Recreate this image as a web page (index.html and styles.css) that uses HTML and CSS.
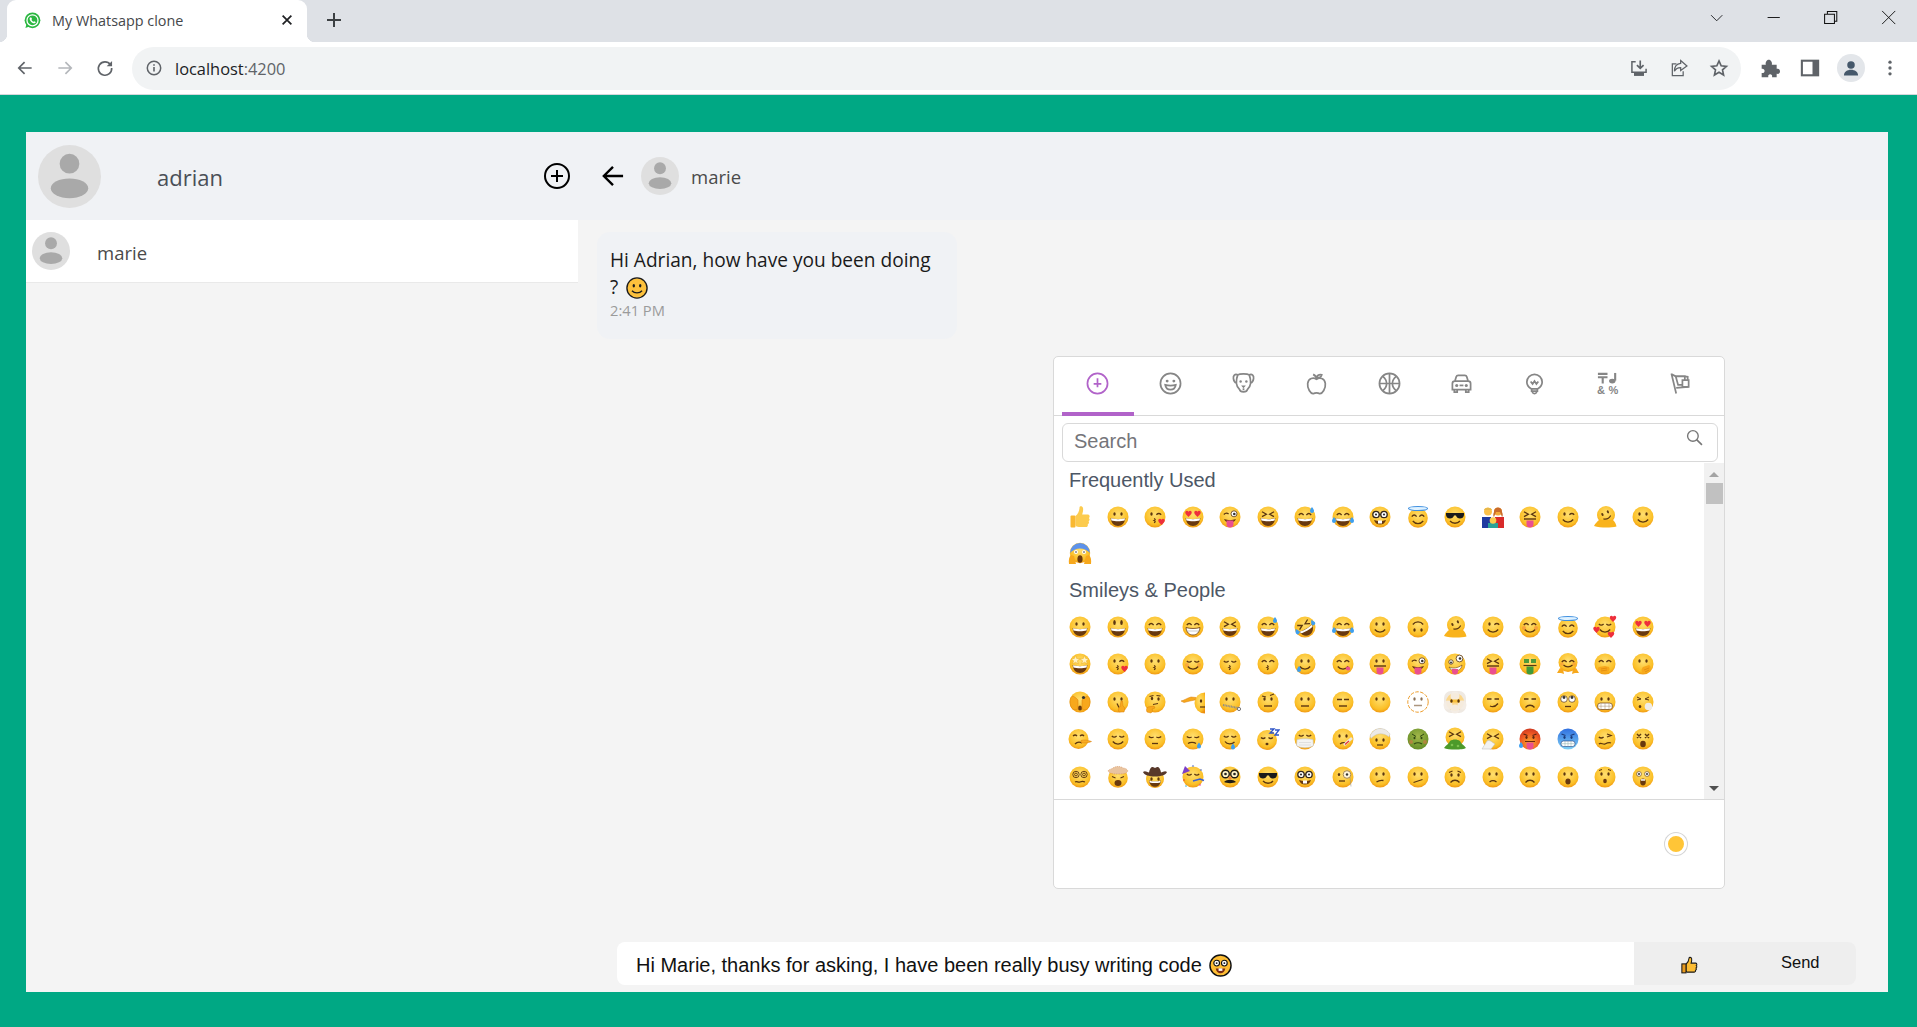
FILE: index.html
```html
<!DOCTYPE html>
<html lang="en">
<head>
    <title>My Whatsapp clone</title>
    <meta charset="utf-8" />
    <link rel="stylesheet" href="styles.css">
</head>
<body>
    <!-- shared emoji parts, every symbol is built from these -->
    <svg class="sprite" xmlns="http://www.w3.org/2000/svg">
        <defs>
            <radialGradient id="fg" cx=".5" cy=".38" r=".68">
                <stop offset="0" stop-color="#ffdf70"/><stop offset=".7" stop-color="#fbbf26"/><stop offset="1" stop-color="#ec8a0c"/>
            </radialGradient>
            <radialGradient id="gg" cx=".5" cy=".38" r=".68"><stop offset="0" stop-color="#a3b84a"/><stop offset="1" stop-color="#5f8a24"/></radialGradient>
            <radialGradient id="rg" cx=".5" cy=".7" r=".75"><stop offset="0" stop-color="#f8b02a"/><stop offset=".6" stop-color="#ef5a25"/><stop offset="1" stop-color="#c9321e"/></radialGradient>
            <linearGradient id="bg" x1="0" y1="0" x2="0" y2="1"><stop offset="0" stop-color="#2f6fe0"/><stop offset="1" stop-color="#7fd0f5"/></linearGradient>
            <circle id="f" cx="12" cy="12" r="10.5" fill="url(#fg)"/>
            <g id="eyes" fill="#5b3610"><ellipse cx="8.5" cy="9" rx="1.2" ry="1.8"/><ellipse cx="15.5" cy="9" rx="1.2" ry="1.8"/></g>
            <path id="arcs" d="M5.8 10.2q2.4-3.4 4.8 0M13.4 10.2q2.4-3.4 4.8 0" fill="none" stroke="#5b3610" stroke-width="1.4"/>
            <path id="shut" d="M5.8 9q2.4 2.2 4.8 0M13.4 9q2.4 2.2 4.8 0" fill="none" stroke="#5b3610" stroke-width="1.3"/>
            <path id="sq" d="M6 6.8l4.4 2.4L6 11.6M18 6.8l-4.4 2.4 4.4 2.4" fill="none" stroke="#5b3610" stroke-width="1.3"/>
            <g id="grin"><path d="M4.6 13c3.4 1.3 11.4 1.3 14.8 0-.4 5-3.6 8-7.4 8s-7-3-7.4-8z" fill="#69390f"/><path d="M5 13.3c3.4 1.1 10.6 1.1 14 0l-.4 2.2c-3.4.9-9.8.9-13.2 0z" fill="#fff"/></g>
            <path id="sm" d="M6.8 14.5c2.600 3.4 7.8 3.4 10.4 0" fill="none" stroke="#5b3610" stroke-width="1.3"/>
            <path id="fl" d="M8 16h8" stroke="#5b3610" stroke-width="1.4"/>
            <path id="fr" d="M7.5 17.5c2.5-3 6.5-3 9 0" fill="none" stroke="#5b3610" stroke-width="1.3"/>
            <path id="tg" d="M8.5 15.5h7V19a3.5 3.5 0 0 1-7 0z" fill="#ea4f90"/>
            <path id="kiss" d="M11 13.5q2.5.8 0 2q2.5 1 0 2.2" fill="none" stroke="#5b3610" stroke-width="1.2"/>
            <path id="ht" d="M0-2.2c-1-1.700-3.5-.9-3.2 1C-3 .6-1 1.800 0 3c1-1.200 3-2.400 3.200-4.200.3-1.900-2.200-2.700-3.200-1z" fill="#ee2f3c"/>
            <path id="dr" d="M0-3c1 1.600 2 2.700 2 3.900a2 2 0 0 1-4 0C-2-.3-1-1.400 0-3z" fill="#3d9ff0"/>
            <g id="wkeye"><circle cx="16" cy="8.800" r="3" fill="#fff" stroke="#5b3610" stroke-width=".8"/><circle cx="16.300" cy="9" r="1.300" fill="#333"/><path d="M5.800 9.500q2.400-2.500 4.800-.5" fill="none" stroke="#5b3610" stroke-width="1.300"/></g>
            <g id="wk"><ellipse cx="8.500" cy="9" rx="1.200" ry="1.800" fill="#5b3610"/><path d="M13.400 9.800q2.400-2.400 4.800 0" fill="none" stroke="#5b3610" stroke-width="1.400"/></g>
            <g id="specs" fill="#fff" stroke="#33261a" stroke-width="1.300"><circle cx="8" cy="9.500" r="3.200"/><circle cx="16" cy="9.500" r="3.200"/><path d="M11.200 9.500h1.600"/></g>
            <g id="shade"><path d="M3 8h18v2c-.3 2.500-2 3.500-4 3.500s-3.500-1.200-4-3h-2c-.5 1.800-2 3-4 3s-3.700-1-4-3.500z" fill="#1b1b1b"/></g>
        </defs>

        <symbol id="thumb" viewBox="0 0 24 24"><path d="M7.500 11c2.500-2 4-5 4-8.500 0-1.500 3-1.800 3.500.5.500 2.500-.500 5-.800 6.500H20c2 .3 2 3 .800 3.500 1.200.8 1 2.800-.300 3.300.9 1 .500 2.700-.800 3.100.500 1.300-.300 2.600-1.700 2.600H11c-2 0-3.500-1-3.500-2z" fill="#fccb4e"/><rect x="2.500" y="10.500" width="5" height="12" rx="1" fill="#f9b831"/></symbol>
        <symbol id="grinning" viewBox="0 0 24 24"><use href="#f"/><use href="#eyes"/><use href="#grin"/></symbol>
        <symbol id="smiley" viewBox="0 0 24 24"><use href="#f"/><ellipse cx="8.500" cy="7.500" rx="1.300" ry="2.600" fill="#5b3610"/><ellipse cx="15.500" cy="7.500" rx="1.300" ry="2.600" fill="#5b3610"/><use href="#grin"/></symbol>
        <symbol id="smile" viewBox="0 0 24 24"><use href="#f"/><use href="#arcs"/><use href="#grin"/></symbol>
        <symbol id="beam" viewBox="0 0 24 24"><use href="#f"/><use href="#arcs"/><path d="M5 12.500c3.400 1.300 10.600 1.300 14 0-.4 5-3.400 7.500-7 7.500s-6.600-2.500-7-7.500z" fill="#fff" stroke="#69390f" stroke-width=".8"/><path d="M5.500 16h13" stroke="#aaa" stroke-width=".6"/></symbol>
        <symbol id="squint" viewBox="0 0 24 24"><use href="#f"/><use href="#sq"/><use href="#grin"/></symbol>
        <symbol id="sweat" viewBox="0 0 24 24"><use href="#f"/><use href="#arcs"/><use href="#grin"/><use href="#dr" x="19" y="5"/></symbol>
        <symbol id="rofl" viewBox="0 0 24 24"><use href="#f"/><g transform="rotate(-30 12 12)"><use href="#sq"/><use href="#grin"/><use href="#dr" x="3" y="12"/><use href="#dr" x="21" y="12"/></g></symbol>
        <symbol id="joy" viewBox="0 0 24 24"><use href="#f"/><use href="#arcs"/><use href="#grin"/><use href="#dr" x="3" y="15"/><use href="#dr" x="21" y="15"/></symbol>
        <symbol id="slight" viewBox="0 0 24 24"><use href="#f"/><use href="#eyes"/><use href="#sm"/></symbol>
        <symbol id="upside" viewBox="0 0 24 24"><use href="#f"/><g transform="rotate(180 12 12)"><use href="#eyes"/><use href="#sm"/></g></symbol>
        <symbol id="melt" viewBox="0 0 24 24"><circle cx="13" cy="10" r="9" fill="url(#fg)"/><path d="M1 21c1.500-3 3-4 5-6h14c2 2 3 4 3.500 6.500-6 1.500-16 1.500-22.500-.5z" fill="#f9b31c"/><g transform="rotate(-25 13 10)"><ellipse cx="10" cy="8" rx="1" ry="1.600" fill="#5b3610"/><ellipse cx="16" cy="8" rx="1" ry="1.600" fill="#5b3610"/><path d="M9 12.500q4 3 8 0" fill="none" stroke="#5b3610" stroke-width="1.200"/></g></symbol>
        <symbol id="wink" viewBox="0 0 24 24"><use href="#f"/><use href="#wk"/><use href="#sm"/></symbol>
        <symbol id="blush" viewBox="0 0 24 24"><use href="#f"/><use href="#arcs"/><use href="#sm"/><circle cx="6" cy="13" r="2" fill="#f47a3c" opacity=".5"/><circle cx="18" cy="13" r="2" fill="#f47a3c" opacity=".5"/></symbol>
        <symbol id="halo" viewBox="0 0 24 24"><circle cx="12" cy="13" r="9.800" fill="url(#fg)"/><ellipse cx="12" cy="3.500" rx="9.500" ry="2" fill="#dff2ff" stroke="#3f8fe0" stroke-width="1.100"/><g transform="translate(0 1.500)"><use href="#arcs"/><use href="#sm"/></g></symbol>
        <symbol id="hearts" viewBox="0 0 24 24"><use href="#f"/><use href="#shut"/><use href="#sm"/><use href="#ht" x="20" y="4"/><use href="#ht" x="3.500" y="15"/><use href="#ht" x="18" y="20"/></symbol>
        <symbol id="hearteyes" viewBox="0 0 24 24"><use href="#f"/><use href="#ht" x="7.500" y="9"/><use href="#ht" x="16.500" y="9"/><use href="#grin"/></symbol>
        <symbol id="star" viewBox="0 0 24 24"><use href="#f"/><path d="M7.500 3.500l1.200 3 3.300.3-2.600 2 .9 3.200-2.800-1.800L4.700 12l.9-3.200-2.600-2 3.300-.3zM16.500 3.500l1.200 3 3.300.3-2.600 2 .9 3.200-2.800-1.800-2.800 1.800.9-3.200-2.600-2 3.300-.3z" fill="#fff3c4" stroke="#e8a91c" stroke-width=".5"/><use href="#grin"/></symbol>
        <symbol id="kissheart" viewBox="0 0 24 24"><use href="#f"/><use href="#wk"/><use href="#kiss"/><use href="#ht" x="18.500" y="17"/></symbol>
        <symbol id="kissing" viewBox="0 0 24 24"><use href="#f"/><use href="#eyes"/><use href="#kiss"/></symbol>
        <symbol id="relaxed" viewBox="0 0 24 24"><use href="#f"/><use href="#shut"/><use href="#sm"/><circle cx="6" cy="13" r="2" fill="#f47a3c" opacity=".4"/><circle cx="18" cy="13" r="2" fill="#f47a3c" opacity=".4"/></symbol>
        <symbol id="kissclosed" viewBox="0 0 24 24"><use href="#f"/><use href="#shut"/><use href="#kiss"/></symbol>
        <symbol id="kisssmile" viewBox="0 0 24 24"><use href="#f"/><use href="#arcs"/><use href="#kiss"/></symbol>
        <symbol id="tear" viewBox="0 0 24 24"><use href="#f"/><use href="#eyes"/><use href="#sm"/><use href="#dr" x="6" y="17"/></symbol>
        <symbol id="yum" viewBox="0 0 24 24"><use href="#f"/><use href="#arcs"/><use href="#sm"/><ellipse cx="17" cy="16.500" rx="2.200" ry="2" fill="#ea4f90"/></symbol>
        <symbol id="tongue" viewBox="0 0 24 24"><use href="#f"/><use href="#eyes"/><path d="M6 14h12" stroke="#5b3610" stroke-width="1.400"/><use href="#tg"/></symbol>
        <symbol id="winktongue" viewBox="0 0 24 24"><use href="#f"/><use href="#wkeye"/><path d="M6 14c4 1.500 8 1.500 12 0-.8 2.500-3 3.500-6 3.500s-5.200-1-6-3.500z" fill="#69390f"/><use href="#tg"/></symbol>
        <symbol id="zany" viewBox="0 0 24 24"><use href="#f"/><circle cx="16.500" cy="6.500" r="3.400" fill="#fff" stroke="#5b3610" stroke-width=".8"/><circle cx="17" cy="6.500" r="1.300" fill="#333"/><circle cx="8" cy="10" r="2.200" fill="#fff" stroke="#5b3610" stroke-width=".8"/><circle cx="8" cy="10.500" r="1" fill="#333"/><path d="M6 15c4 2 9 1 13-2-.5 4-3.500 6-7 6-3 0-5-2-6-4z" fill="#fff" stroke="#69390f" stroke-width=".6"/><path d="M9 17h6v2.500a3 3 0 0 1-6 0z" fill="#ea4f90"/></symbol>
        <symbol id="sqtongue" viewBox="0 0 24 24"><use href="#f"/><use href="#sq"/><path d="M6 14h12" stroke="#5b3610" stroke-width="1.400"/><use href="#tg"/></symbol>
        <symbol id="money" viewBox="0 0 24 24"><use href="#f"/><path d="M6 7h5v4H6zM13 7h5v4h-5z" fill="#4f9a3a"/><path d="M5.500 13.500h13" stroke="#5b3610" stroke-width="1.200"/><path d="M8.500 14.500h7v5a3.500 3 0 0 1-7 0z" fill="#3f9a3a"/></symbol>
        <symbol id="hug" viewBox="0 0 24 24"><circle cx="12" cy="10.500" r="9.500" fill="url(#fg)"/><use href="#arcs"/><path d="M7.500 13c2.500 2.500 6.500 2.500 9 0" fill="none" stroke="#5b3610" stroke-width="1.200"/><circle cx="6" cy="12" r="1.800" fill="#f47a3c" opacity=".4"/><circle cx="18" cy="12" r="1.800" fill="#f47a3c" opacity=".4"/><path d="M1 21l3-5 3 1 1 5-3-1zM23 21l-3-5-3 1-1 5 3-1z" fill="#f7a81c"/></symbol>
        <symbol id="giggle" viewBox="0 0 24 24"><use href="#f"/><use href="#arcs"/><path d="M7 21c-2-2-3-5-1-6l6-1 4 1c1 2 .500 4-2 6z" fill="#f7a81c"/><path d="M8 17l6-1M8 19l6-1" stroke="#d97f0c" stroke-width=".6"/></symbol>
        <symbol id="hush" viewBox="0 0 24 24"><use href="#f"/><use href="#eyes"/><path d="M12 21c-2-1-2-4 0-6l6-2c2 1 2 4 1 6z" fill="#f7a81c"/><path d="M13 18l5-2M14 20l4-2" stroke="#d97f0c" stroke-width=".6"/></symbol>
        <symbol id="peek" viewBox="0 0 24 24"><use href="#f"/><ellipse cx="12" cy="18" rx="2" ry="2.500" fill="#69390f"/><path d="M2 11c0-3 2-5 3-5l3 2 2 2v9c-4 2-8 0-8-8zM22 11c0-3-2-5-3-5l-3 2-2 2v9c4 2 8 0 8-8z" fill="#f7a81c" stroke="#d97f0c" stroke-width=".5"/><circle cx="15.500" cy="7.500" r="1.600" fill="#333"/></symbol>
        <symbol id="shush" viewBox="0 0 24 24"><use href="#f"/><use href="#eyes"/><path d="M11 13.500l2 4" stroke="#5b3610" stroke-width="1.200"/><path d="M13 22c-1-2-1-4 1-5l1-6h1.500l.5 5c2 1 2 4 1 6z" fill="#f7a81c" stroke="#d97f0c" stroke-width=".5"/></symbol>
        <symbol id="think" viewBox="0 0 24 24"><use href="#f"/><ellipse cx="9" cy="8.500" rx="1.200" ry="1.800" fill="#5b3610"/><ellipse cx="15.500" cy="9" rx="1.200" ry="1.800" fill="#5b3610"/><path d="M13.500 5.500l4 .5M6.500 6.500l4-1M10 14.500l5-1" fill="none" stroke="#5b3610" stroke-width="1.100"/><path d="M4 22c-1-2-.5-4 1-5l6-1 1 2-3 1c1 2 0 3-1 4z" fill="#f7a81c" stroke="#d97f0c" stroke-width=".5"/></symbol>
        <symbol id="salute" viewBox="0 0 24 24"><path d="M24 2.500a10.500 10.500 0 0 0 0 21z" fill="url(#fg)"/><ellipse cx="20" cy="11" rx="1.200" ry="1.800" fill="#5b3610"/><path d="M19 17h5" stroke="#5b3610" stroke-width="1.200"/><path d="M0 11c3-.5 6-3 10-4l5 .5-1 2.500-5 1-6 1.500z" fill="#f7a81c" stroke="#d97f0c" stroke-width=".5"/></symbol>
        <symbol id="zipper" viewBox="0 0 24 24"><use href="#f"/><use href="#eyes"/><path d="M5 15l15 3" stroke="#8b8b8b" stroke-width="2" stroke-dasharray="1 .6"/><circle cx="21" cy="19" r="1.600" fill="none" stroke="#777"/></symbol>
        <symbol id="brow" viewBox="0 0 24 24"><use href="#f"/><use href="#eyes"/><path d="M6 6l4 1M14 5.500l4-1.500" stroke="#5b3610" stroke-width="1.100"/><use href="#fl"/></symbol>
        <symbol id="neutral" viewBox="0 0 24 24"><use href="#f"/><use href="#eyes"/><use href="#fl"/></symbol>
        <symbol id="expr" viewBox="0 0 24 24"><use href="#f"/><path d="M6 9.500h5M13 9.500h5" stroke="#5b3610" stroke-width="1.600"/><use href="#fl"/></symbol>
        <symbol id="nomouth" viewBox="0 0 24 24"><use href="#f"/><use href="#eyes"/></symbol>
        <symbol id="dotted" viewBox="0 0 24 24"><circle cx="12" cy="12" r="10.200" fill="#fff" stroke="#ed9c2a" stroke-width="1" stroke-dasharray="3.600 1.400"/><g opacity=".7"><use href="#eyes"/><path d="M8 15.500h8" stroke="#8a6b48" stroke-width="1.500"/></g></symbol>
        <symbol id="clouds" viewBox="0 0 24 24"><rect x="1" y="1" width="22" height="22" rx="7" fill="#efe9e2"/><circle cx="12" cy="12" r="9" fill="#fcd78a"/><circle cx="12" cy="6" r="4.500" fill="#f4ede6" opacity=".9"/><circle cx="5" cy="15" r="4.500" fill="#f4ede6" opacity=".9"/><circle cx="19" cy="15" r="4.500" fill="#f4ede6" opacity=".9"/><circle cx="12" cy="19" r="4.500" fill="#f4ede6" opacity=".9"/><rect x="7" y="9.500" width="10" height="3" fill="#f9c03a"/><use href="#eyes" y="2"/></symbol>
        <symbol id="smirk" viewBox="0 0 24 24"><use href="#f"/><path d="M6 9h4.500M13.500 9H18" stroke="#5b3610" stroke-width="1.600"/><path d="M9 16c3 1.300 6 0 8-2.500" fill="none" stroke="#5b3610" stroke-width="1.300"/></symbol>
        <symbol id="unamused" viewBox="0 0 24 24"><use href="#f"/><path d="M6 9h4.500M13.500 9H18" stroke="#5b3610" stroke-width="1.600"/><use href="#fr"/></symbol>
        <symbol id="roll" viewBox="0 0 24 24"><use href="#f"/><circle cx="8" cy="9" r="3.300" fill="#fff" stroke="#5b3610" stroke-width=".7"/><circle cx="16" cy="9" r="3.300" fill="#fff" stroke="#5b3610" stroke-width=".7"/><circle cx="8" cy="7.500" r="1.400" fill="#333"/><circle cx="16" cy="7.500" r="1.400" fill="#333"/><path d="M9 16.500h6" stroke="#5b3610" stroke-width="1.300"/></symbol>
        <symbol id="grimace" viewBox="0 0 24 24"><use href="#f"/><use href="#eyes"/><rect x="4.500" y="13" width="15" height="6.500" rx="3" fill="#fff" stroke="#69390f" stroke-width=".7"/><path d="M4.500 16.200h15M8 13v6.500M12 13v6.500M16 13v6.500" stroke="#a78a64" stroke-width=".5"/></symbol>
        <symbol id="exhale" viewBox="0 0 24 24"><use href="#f"/><path d="M6 7l4 2-4 1M18 7l-4 2 4 1" fill="none" stroke="#5b3610" stroke-width="1"/><ellipse cx="9" cy="16.500" rx="1.300" ry="1.500" fill="#5b3610"/><circle cx="17.500" cy="16.500" r="3.800" fill="#f0ede8"/></symbol>
        <symbol id="lying" viewBox="0 0 24 24"><circle cx="10.500" cy="12" r="10" fill="url(#fg)"/><path d="M5 9q2.200-2 4 0M12 9q2.200-2 4 0" fill="none" stroke="#5b3610" stroke-width="1.300"/><path d="M7 17c2-2 5-2 7-1" fill="none" stroke="#5b3610" stroke-width="1.300"/><path d="M13 13.500c3-1 7-.5 10.500 1-3 1.500-8 2-10.500 1z" fill="#f8ab22" stroke="#d97f0c" stroke-width=".5"/></symbol>
        <symbol id="relieved" viewBox="0 0 24 24"><use href="#f"/><use href="#shut"/><use href="#sm"/></symbol>
        <symbol id="pensive" viewBox="0 0 24 24"><use href="#f"/><path d="M5.800 9.500q2.400 2 4.800.5M13.400 10q2.400 1.500 4.800-.5" fill="none" stroke="#5b3610" stroke-width="1.300"/><path d="M9 16.500h6" stroke="#5b3610" stroke-width="1.300"/></symbol>
        <symbol id="sleepy" viewBox="0 0 24 24"><use href="#f"/><path d="M5.800 9.500q2.400 2 4.800.5M13.400 10q2.400 1.500 4.800-.5" fill="none" stroke="#5b3610" stroke-width="1.300"/><path d="M7 16.500c2-1.500 6-1.500 8 0" fill="none" stroke="#5b3610" stroke-width="1.300"/><use href="#dr" x="18" y="18.500"/></symbol>
        <symbol id="drool" viewBox="0 0 24 24"><use href="#f"/><use href="#shut"/><path d="M7 14.500c2 3 7 3 9.500.5" fill="none" stroke="#5b3610" stroke-width="1.300"/><use href="#dr" x="15" y="19.500"/></symbol>
        <symbol id="sleeping" viewBox="0 0 24 24"><circle cx="11" cy="13" r="10" fill="url(#fg)"/><path d="M5 10.500q2.200 2 4.400 0M12.500 10.500q2.200 2 4.400 0" fill="none" stroke="#5b3610" stroke-width="1.300"/><ellipse cx="11" cy="17" rx="1.500" ry="1.200" fill="#5b3610"/><path d="M14 2h4l-4 4h4M19 3h4l-4 5h4" fill="none" stroke="#2f55c8" stroke-width="1.300"/></symbol>
        <symbol id="mask" viewBox="0 0 24 24"><use href="#f"/><use href="#shut" y="-1"/><path d="M4 12.500c4-1 12-1 16 0l.5 6c-4 3-13 3-17 0z" fill="#f4f4f2" stroke="#bbb" stroke-width=".5"/><path d="M6 15.500h12M6 18h12" stroke="#ccc" stroke-width=".5"/></symbol>
        <symbol id="thermo" viewBox="0 0 24 24"><use href="#f"/><use href="#eyes"/><path d="M9 17c2-1.500 5-1.500 7-.5" fill="none" stroke="#5b3610" stroke-width="1.200"/><path d="M13 18L21 11" stroke="#e8e8e8" stroke-width="2.600"/><path d="M14 17.500l4-3.500" stroke="#e33" stroke-width="1.200"/></symbol>
        <symbol id="bandage" viewBox="0 0 24 24"><use href="#f"/><path d="M2 9c2-5 6-7.500 10-7.500S19 3 22 7l-1 3C15 5 8 6 3 11.500z" fill="#eceae6" stroke="#bbb" stroke-width=".4"/><use href="#eyes" y="4"/><path d="M9 18h6" stroke="#5b3610" stroke-width="1.200"/></symbol>
        <symbol id="nausea" viewBox="0 0 24 24"><circle cx="12" cy="12" r="10.500" fill="url(#gg)"/><path d="M6 7l4 2.500M18 7l-4 2.500" stroke="#2f4a12" stroke-width="1"/><ellipse cx="8.500" cy="11" rx="1" ry="1.300" fill="#2f4a12"/><ellipse cx="15.500" cy="11" rx="1" ry="1.300" fill="#2f4a12"/><path d="M8 17q4-2.500 8 0" fill="none" stroke="#2f4a12" stroke-width="1.200"/><circle cx="5" cy="15" r="2" fill="#e8704a" opacity=".5"/><circle cx="19" cy="15" r="2" fill="#e8704a" opacity=".5"/></symbol>
        <symbol id="vomit" viewBox="0 0 24 24"><circle cx="12" cy="10" r="9.500" fill="url(#fg)"/><use href="#sq" y="-2"/><path d="M7 14c3-2 7-2 10 0 1 3 4 4 6 7-3 2-18 2-22 0 2-3 5-4 6-7z" fill="#4c9a2a"/><circle cx="9" cy="18" r="1.300" fill="#7cc04f"/><circle cx="15" cy="19" r="1.300" fill="#7cc04f"/></symbol>
        <symbol id="sneeze" viewBox="0 0 24 24"><use href="#f"/><use href="#sq"/><path d="M1 22l5-8c2-1 4 0 5 1l3 2-4 5z" fill="#f2f2f2" stroke="#bbb" stroke-width=".5"/></symbol>
        <symbol id="hot" viewBox="0 0 24 24"><circle cx="12" cy="12" r="10.500" fill="url(#rg)"/><path d="M5.500 7l4 1.500M18.500 7l-4 1.500" stroke="#5b2510" stroke-width="1.100"/><ellipse cx="8.500" cy="10.500" rx="1.100" ry="1.400" fill="#5b2510"/><ellipse cx="15.500" cy="10.500" rx="1.100" ry="1.400" fill="#5b2510"/><path d="M7 14h10v1H7z" fill="#69290f"/><use href="#tg"/><use href="#dr" x="3" y="18"/></symbol>
        <symbol id="cold" viewBox="0 0 24 24"><circle cx="12" cy="12" r="10.500" fill="url(#bg)"/><path d="M5.500 7l4 1.500M18.500 7l-4 1.500" stroke="#1b3a7a" stroke-width="1.100"/><ellipse cx="8.500" cy="10.500" rx="1.100" ry="1.400" fill="#1b3a7a"/><ellipse cx="15.500" cy="10.500" rx="1.100" ry="1.400" fill="#1b3a7a"/><rect x="5" y="14" width="14" height="5.500" rx="2.500" fill="#fff" stroke="#1b3a7a" stroke-width=".6"/><path d="M5 16.700h14M9 14v5.500M12 14v5.500M15 14v5.500" stroke="#8aa" stroke-width=".5"/></symbol>
        <symbol id="woozy" viewBox="0 0 24 24"><use href="#f"/><path d="M5.800 10q2.400 2 4.800 0" fill="none" stroke="#5b3610" stroke-width="1.300"/><path d="M14 7l4 1.500-4 1.500" fill="none" stroke="#5b3610" stroke-width="1.300"/><path d="M6 17c2-2 4 1 6 0s4-2 6-1" fill="none" stroke="#5b3610" stroke-width="1.300"/></symbol>
        <symbol id="dizzy" viewBox="0 0 24 24"><use href="#f"/><path d="M6 7l4 4M10 7l-4 4M14 7l4 4M18 7l-4 4" stroke="#5b3610" stroke-width="1.400"/><ellipse cx="12" cy="17" rx="2.800" ry="3.200" fill="#69390f"/></symbol>
        <symbol id="spiral" viewBox="0 0 24 24"><use href="#f"/><g fill="none" stroke="#5b3610" stroke-width=".9"><circle cx="8" cy="9.500" r="3.200"/><circle cx="8" cy="9.500" r="1.400"/><circle cx="16" cy="9.500" r="3.200"/><circle cx="16" cy="9.500" r="1.400"/><path d="M7 17c2-1.500 3 1 5 0s3-1 5 0" stroke-width="1.200"/></g></symbol>
        <symbol id="explode" viewBox="0 0 24 24"><circle cx="12" cy="13" r="9.800" fill="url(#fg)"/><path d="M2 6c1-2 4-2 5-3 2-2 8-2 10 0 2 0 4 1 5 3-2 3-5 3-10 3S4 9 2 6z" fill="#e9c4a0" stroke="#cc7a3c" stroke-width=".5" stroke-dasharray="1 1"/><path d="M6 11.500l3.500 1.500M18 11.500L14.500 13" stroke="#5b3610" stroke-width="1.100"/><ellipse cx="12" cy="18" rx="3.500" ry="3" fill="#69390f"/></symbol>
        <symbol id="cowboy" viewBox="0 0 24 24"><circle cx="12" cy="14" r="9" fill="url(#fg)"/><path d="M0 7c2-2 4 0 6 .5C6.500 4 8 2 9.500 2c1 0 1.500 .8 2.500 .8S13.500 2 14.500 2C16 2 17.500 4 18 7.500c2-.5 4-2.500 6-.5-1 3-6 4.500-12 4.500S1 10 0 7z" fill="#57382a"/><use href="#eyes" y="5"/><use href="#grin" transform="translate(2.400 5) scale(.8)"/></symbol>
        <symbol id="party" viewBox="0 0 24 24"><use href="#f"/><use href="#shut"/><path d="M1 9l3-8 5 5z" fill="#7c3fc8"/><path d="M12 16l7-2 4 1.500" fill="none" stroke="#3a5fd0" stroke-width="1.500"/><circle cx="3" cy="15" r=".8" fill="#e33"/><circle cx="20" cy="5" r=".8" fill="#3a5fd0"/><circle cx="5" cy="21" r=".8" fill="#3ac"/><circle cx="19" cy="20" r=".8" fill="#e3a"/><circle cx="12" cy="1" r=".8" fill="#3a5fd0"/></symbol>
        <symbol id="disguise" viewBox="0 0 24 24"><use href="#f"/><g fill="#fff3c9" stroke="#1f1a14" stroke-width="1.400"><circle cx="7.500" cy="9" r="3.800"/><circle cx="16.500" cy="9" r="3.800"/></g><circle cx="7.500" cy="9" r="1.300" fill="#222"/><circle cx="16.500" cy="9" r="1.300" fill="#222"/><path d="M6 17c3-3 9-3 12 0-3 1.500-9 1.500-12 0z" fill="#1f1a14"/><circle cx="12" cy="13" r="1.800" fill="#f08a3a"/></symbol>
        <symbol id="shades" viewBox="0 0 24 24"><use href="#f"/><use href="#shade"/><path d="M7 16c2.600 3 7.400 3 10 0" fill="none" stroke="#5b3610" stroke-width="1.300"/></symbol>
        <symbol id="nerd" viewBox="0 0 24 24"><use href="#f"/><use href="#specs"/><circle cx="8" cy="9.500" r="1.100" fill="#333"/><circle cx="16" cy="9.500" r="1.100" fill="#333"/><path d="M6 15c3.500 1.500 8.500 1.500 12 0-1 3-3 4.500-6 4.500s-5-1.500-6-4.500z" fill="#69390f"/><rect x="10" y="15.500" width="4" height="3" fill="#fff"/></symbol>
        <symbol id="monocle" viewBox="0 0 24 24"><use href="#f"/><ellipse cx="8" cy="9.500" rx="1.200" ry="1.600" fill="#5b3610"/><circle cx="16" cy="9.500" r="3.800" fill="#fff6dc" stroke="#a88a5a" stroke-width="1"/><circle cx="16" cy="9.500" r="1.200" fill="#333"/><path d="M8 16h6" stroke="#5b3610" stroke-width="1.300"/><path d="M19 12.500l1 9" stroke="#888" stroke-width=".5"/></symbol>
        <symbol id="confused" viewBox="0 0 24 24"><use href="#f"/><use href="#eyes"/><path d="M8.500 17c2-1.500 4.500-2 7-1.500" fill="none" stroke="#5b3610" stroke-width="1.300"/></symbol>
        <symbol id="diag" viewBox="0 0 24 24"><use href="#f"/><use href="#eyes"/><path d="M7.500 17.500l9-3" stroke="#5b3610" stroke-width="1.300"/></symbol>
        <symbol id="worried" viewBox="0 0 24 24"><use href="#f"/><path d="M6 7.500l3.500-1.500M18 7.500L14.500 6" stroke="#5b3610" stroke-width="1.100"/><use href="#eyes" y="1"/><use href="#fr"/></symbol>
        <symbol id="sfrown" viewBox="0 0 24 24"><use href="#f"/><use href="#eyes"/><path d="M8.500 17c2-1.500 5-1.500 7 0" fill="none" stroke="#5b3610" stroke-width="1.300"/></symbol>
        <symbol id="frown" viewBox="0 0 24 24"><use href="#f"/><use href="#eyes"/><use href="#fr"/></symbol>
        <symbol id="openm" viewBox="0 0 24 24"><use href="#f"/><use href="#eyes"/><ellipse cx="12" cy="16.500" rx="2.600" ry="3" fill="#69390f"/></symbol>
        <symbol id="hushed" viewBox="0 0 24 24"><use href="#f"/><use href="#eyes"/><path d="M6 5.500l3-1M18 5.500l-3-1" stroke="#5b3610" stroke-width="1"/><ellipse cx="12" cy="16" rx="1.800" ry="2.200" fill="#69390f"/></symbol>
        <symbol id="astonished" viewBox="0 0 24 24"><use href="#f"/><circle cx="8" cy="9" r="2.400" fill="#fff" stroke="#5b3610" stroke-width=".6"/><circle cx="16" cy="9" r="2.400" fill="#fff" stroke="#5b3610" stroke-width=".6"/><circle cx="8" cy="9" r="1" fill="#333"/><circle cx="16" cy="9" r="1" fill="#333"/><ellipse cx="12" cy="17" rx="2.800" ry="3.400" fill="#69390f"/><rect x="10" y="14.200" width="4" height="1.500" fill="#fff"/></symbol>
        <symbol id="family" viewBox="0 0 24 24"><rect x="1" y="12" width="9" height="11" fill="#1f3aa0"/><rect x="14" y="12" width="9" height="11" fill="#d82a2a"/><circle cx="7" cy="6.500" r="4" fill="#fbc14a"/><circle cx="17" cy="6.500" r="4" fill="#f4a93a"/><path d="M13 7c0-6 8-6 8 0 1 2 1 4 0 5l-2-5-4 0-2 5c-1-1-1-3 0-5z" fill="#c96a2a"/><path d="M3 5c1-3 7-3 8 0H3z" fill="#e8b84a"/><rect x="7" y="18" width="10" height="5" fill="#2aa198"/><circle cx="12" cy="15.500" r="3.300" fill="#fcca4e"/></symbol>
        <symbol id="scream" viewBox="0 0 24 24"><circle cx="12" cy="11" r="10.200" fill="url(#fg)"/><path d="M2 11a10 10 0 0 1 20 0c-3-3-6-4.500-10-4.500S5 8 2 11z" fill="#5d92ea"/><circle cx="8" cy="10" r="2" fill="#fff"/><circle cx="16" cy="10" r="2" fill="#fff"/><circle cx="8" cy="10" r=".8" fill="#333"/><circle cx="16" cy="10" r=".8" fill="#333"/><ellipse cx="12" cy="17" rx="2.600" ry="3.800" fill="#69390f"/><path d="M1 22c-.5-4 0-7 2-9l3 1 2 8zM23 22c.5-4 0-7-2-9l-3 1-2 8z" fill="#f7a81c"/></symbol>
    </svg>

    <div class="tabstrip">
        <div class="tab">
            <svg class="favicon" viewBox="0 0 16 16"><circle cx="8" cy="7.800" r="7.400" fill="#2bb741"/><path d="M1.300 15l1.200-4.200 2.600 2.800z" fill="#2bb741"/><circle cx="8" cy="7.800" r="5.200" fill="none" stroke="#fff" stroke-width="1.200"/><path d="M5.800 5.200c-.8.800-.6 2 .3 3.200s2.300 2.200 3.400 2.200c.9 0 1.500-.5 1.500-1.200L9.700 8.600l-.7.600C8.200 8.800 7.400 8 7 7.200l.6-.7-.8-1.400z" fill="#fff"/></svg>
            <span class="tab-title">My Whatsapp clone</span>
            <svg class="tab-close" viewBox="0 0 16 16"><path d="M3 3l10 10M13 3L3 13" stroke="#202124" stroke-width="2"/></svg>
        </div>
        <svg class="new-tab" viewBox="0 0 16 16"><path d="M8 1v14M1 8h14" stroke="#3c4043" stroke-width="2"/></svg>
        <div class="win-controls">
            <svg viewBox="0 0 16 16"><path d="M2 5.500l6 6 6-6" fill="none" stroke="#202124"/></svg>
            <svg viewBox="0 0 16 16"><path d="M1.500 8h13" stroke="#111" stroke-width="1"/></svg>
            <svg viewBox="0 0 16 16"><path d="M1.500 4.500h10.500v10H1.500zM4.500 4.500V1.500h10v10.500h-2.500" fill="none" stroke="#111" stroke-width="1.100"/></svg>
            <svg viewBox="0 0 16 16"><path d="M1 1l14 14M15 1L1 15" stroke="#111" stroke-width="1"/></svg>
        </div>
    </div>

    <div class="toolbar">
        <svg class="tool first" viewBox="0 0 24 24"><path d="M20 12H5M11.500 5L4.500 12l7 7" fill="none" stroke="#5f6368" stroke-width="2"/></svg>
        <svg class="tool" viewBox="0 0 24 24"><path d="M4 12h15M12.500 5l7 7-7 7" fill="none" stroke="#b4b7bb" stroke-width="2"/></svg>
        <svg class="tool" viewBox="0 0 24 24"><path d="M18.500 8A8 8 0 1 0 20 12" fill="none" stroke="#5f6368" stroke-width="2"/><path d="M20.500 3.500v6.500H14z" fill="#5f6368"/></svg>
        <div class="omnibox">
            <svg class="info" viewBox="0 0 16 16"><circle cx="8" cy="8" r="6.700" fill="none" stroke="#5f6368" stroke-width="1.500"/><path d="M8 7v4.500M8 4.200v1.600" stroke="#5f6368" stroke-width="1.600"/></svg>
            <span class="url">localhost<span class="url-port">:4200</span></span>
            <div class="omni-actions">
                <svg viewBox="0 0 24 24"><path d="M8 4.500H3.500V17h17V13" fill="none" stroke="#5f6368" stroke-width="1.800"/><path d="M13.500 3v9M9.500 8.500l4 4 4-4" fill="none" stroke="#5f6368" stroke-width="2"/><rect x="6" y="18" width="12" height="3.500" fill="#5f6368"/></svg>
                <svg viewBox="0 0 24 24"><path d="M9 7H4v14h13v-5" fill="none" stroke="#5f6368" stroke-width="1.500"/><path d="M14 3l7.500 6.500L14 15v-3.500c-3.500 0-6 1.500-7.500 4.500 0-5 2.500-9 7.500-9.500z" fill="none" stroke="#5f6368" stroke-width="1.500"/></svg>
                <svg viewBox="0 0 24 24"><path d="M12 3.500l2.600 5.800 6.300.7-4.700 4.200 1.300 6.200-5.500-3.200-5.500 3.200 1.300-6.200L3.100 10l6.300-.7z" fill="none" stroke="#5f6368" stroke-width="2"/></svg>
            </div>
        </div>
        <div class="extras">
            <svg viewBox="0 0 24 24"><path d="M2 8h5c-.8-2.800.9-6 3.500-6S15 5.200 14.200 8H20v5c2.800-.8 4 1 4 3s-1.200 3.800-4 3v4h-5.500c.6-2.500-.8-3.500-2.300-3.500S9.400 20.500 10 23H2v-5c2.300.5 3.500-1 3.500-2.500S4.300 12.500 2 13z" fill="#5f6368"/></svg>
            <svg viewBox="0 0 24 24"><rect x="1" y="2" width="22" height="20" fill="#5f6368"/><rect x="3.500" y="4.500" width="11.500" height="15" fill="#fff"/></svg>
            <span class="profile"><svg viewBox="0 0 24 24"><circle cx="12" cy="8.500" r="4.500" fill="#45586b"/><path d="M3.500 21c0-4.500 4-7 8.500-7s8.500 2.500 8.500 7z" fill="#45586b"/></svg></span>
            <svg viewBox="0 0 24 24"><circle cx="12" cy="5" r="2" fill="#5f6368"/><circle cx="12" cy="12" r="2" fill="#5f6368"/><circle cx="12" cy="19" r="2" fill="#5f6368"/></svg>
        </div>
    </div>

    <main class="page">
        <div class="app">
            <section class="sidebar">
                <header class="side-head">
                    <svg class="avatar avatar-lg" viewBox="0 0 64 64"><circle cx="32" cy="32" r="32" fill="#dfdfdf"/><circle cx="32" cy="19" r="10" fill="#a9a9a9"/><ellipse cx="32" cy="44" rx="19" ry="10" fill="#a9a9a9"/></svg>
                    <span class="me-name">adrian</span>
                    <svg class="add-chat" viewBox="0 0 26 26"><circle cx="13" cy="13" r="12" fill="none" stroke="#000" stroke-width="2"/><path d="M13 7v12M7 13h12" stroke="#000" stroke-width="2"/></svg>
                </header>
                <div class="contact">
                    <svg class="avatar avatar-sm" viewBox="0 0 64 64"><circle cx="32" cy="32" r="32" fill="#dfdfdf"/><circle cx="32" cy="19" r="10" fill="#a9a9a9"/><ellipse cx="32" cy="44" rx="19" ry="10" fill="#a9a9a9"/></svg>
                    <span class="contact-name">marie</span>
                </div>
            </section>

            <section class="chat">
                <header class="chat-head">
                    <svg class="back" viewBox="0 0 24 24"><path d="M23 12H2M12 2L2 12l10 10" fill="none" stroke="#000" stroke-width="2.600"/></svg>
                    <svg class="avatar avatar-sm" viewBox="0 0 64 64"><circle cx="32" cy="32" r="32" fill="#dfdfdf"/><circle cx="32" cy="19" r="10" fill="#a9a9a9"/><ellipse cx="32" cy="44" rx="19" ry="10" fill="#a9a9a9"/></svg>
                    <span class="contact-name">marie</span>
                </header>

                <div class="bubble">
                    <p class="bubble-text">Hi Adrian, how have you been doing<br>? <svg class="msg-emoji" viewBox="0 0 24 24"><circle cx="12" cy="12" r="11" fill="#fdc13c" stroke="#1b1b1b" stroke-width="1.500"/><ellipse cx="8.500" cy="9.500" rx="1.300" ry="1.900" fill="#1b1b1b"/><ellipse cx="15.500" cy="9.500" rx="1.300" ry="1.900" fill="#1b1b1b"/><path d="M6.500 15c2.800 3 8.200 3 11 0" fill="none" stroke="#1b1b1b" stroke-width="1.500"/></svg></p>
                    <span class="bubble-time">2:41 PM</span>
                </div>

                <div class="composer">
                    <div class="composer-input">Hi Marie, thanks for asking, I have been really busy writing code <svg class="msg-emoji" viewBox="0 0 24 24"><circle cx="12" cy="12" r="11" fill="#fdbd34" stroke="#111" stroke-width="1.500"/><circle cx="8" cy="9.500" r="3" fill="#fff" stroke="#111" stroke-width="1.200"/><circle cx="16" cy="9.500" r="3" fill="#fff" stroke="#111" stroke-width="1.200"/><circle cx="8" cy="9.500" r="1" fill="#111"/><circle cx="16" cy="9.500" r="1" fill="#111"/><path d="M7 15h10c-.5 3-2.500 5-5 5s-4.500-2-5-5z" fill="#7a2a12"/><rect x="10" y="15" width="4" height="2.600" fill="#fff"/></svg></div>
                    <div class="composer-actions">
                        <svg class="like" viewBox="0 0 24 24"><path d="M8 11c2.500-2 3.800-4.800 4-8 .1-1.500 3-1.700 3.500.5.500 2.300-.3 4.500-.7 6H21c1.800.3 1.800 2.800.7 3.400 1 .8.900 2.700-.3 3.200.8 1 .5 2.600-.8 3 .4 1.200-.3 2.400-1.600 2.400H11c-1.800 0-3-1-3-2z" fill="#fdbd34" stroke="#1a1a1a" stroke-width="1.400"/><rect x="2.500" y="10.500" width="5.500" height="12" fill="#e89a1f" stroke="#1a1a1a" stroke-width="1.400"/></svg>
                        <span class="send">Send</span>
                    </div>
                </div>

                <div class="picker">
                    <nav class="picker-tabs">
                        <span class="ptab active"><svg viewBox="0 0 24 24"><circle cx="12" cy="12" r="10.500"/><path d="M12 6.500V16M8 12.500h8"/></svg></span>
                        <span class="ptab"><svg viewBox="0 0 24 24"><circle cx="12" cy="12" r="10.500"/><circle class="fill" cx="8.500" cy="9.500" r="1.500"/><circle class="fill" cx="15.500" cy="9.500" r="1.500"/><path d="M6.500 13.500c3.500 1 7.500 1 11 0-.5 3.500-3 5-5.500 5s-5-1.500-5.500-5z"/></svg></span>
                        <span class="ptab"><svg viewBox="0 0 24 24"><path d="M6 3c2-1.500 10-1.500 12 0 3-1.500 5 1 4.500 4-.3 2.200-1.200 4-3 4.500-.3 3-2 5.500-3.500 7-.5 3-7.500 3-8 0-1.500-1.500-3.200-4-3.500-7C2.700 11 1.800 9.200 1.500 7 1 4 3 1.500 6 3z"/><path d="M6 3c-1 2.500-1.500 5.500-1.500 8.500M18 3c1 2.500 1.500 5.500 1.500 8.500"/><path class="fill" d="M9.500 14h5l-2.500 3z"/><path d="M12 17v2"/><circle class="fill" cx="9" cy="10" r="1.300"/><circle class="fill" cx="15" cy="10" r="1.300"/></svg></span>
                        <span class="ptab"><svg viewBox="0 0 24 24"><path d="M12 7.500C9 5.500 3.500 6 2.800 12c-.6 5 3 11 6 10.500 1.500-.3 2-.8 3.200-.8s1.700.5 3.200.8c3 .5 6.600-5.500 6-10.500C20.500 6 15 5.500 12 7.500z"/><path d="M12 7.500C12 5 10.500 3.500 8.500 2.500M12 5.500c1-2 3-3 5.500-2.500-.5 2-2.500 3.500-5.500 2.500z"/></svg></span>
                        <span class="ptab"><svg viewBox="0 0 24 24"><circle cx="12" cy="12" r="10.500"/><path d="M12 1.500v21M1.500 12h21M5 4.500c3 2.500 4 5 4 7.500s-1 5-4 7.500M19 4.500c-3 2.500-4 5-4 7.500s1 5 4 7.500"/></svg></span>
                        <span class="ptab"><svg viewBox="0 0 24 24"><path d="M5 10l1.500-5c.3-1 1-1.500 2-1.500h7c1 0 1.700.5 2 1.500L19 10M2.500 12c0-1.500 1-2.500 2.500-2.500h14c1.500 0 2.500 1 2.500 2.500v6.500h-19zM4.500 18.500v2.500h3v-2.500M16.500 18.500v2.500h3v-2.500"/><circle class="fill" cx="7" cy="14" r="1.600"/><circle class="fill" cx="17" cy="14" r="1.600"/><path d="M10 14h4"/></svg></span>
                        <span class="ptab"><svg viewBox="0 0 24 24"><path d="M8.500 17.500C6 16 4 13.500 4 10.500a8 8 0 0 1 16 0c0 3-2 5.500-4.500 7zM9 17.500h6v2.500H9zM10 20v1.500c1 1.500 3 1.500 4 0V20"/><path d="M8 10l2 2.500 2-3 2 3 2-2.500"/></svg></span>
                        <span class="ptab"><svg viewBox="0 0 24 24"><path class="thick" d="M2 2h10M2 5.500h10M7 5.500V12"/><path class="thick" d="M20 1v8"/><ellipse class="fill" cx="17" cy="9.500" rx="3.400" ry="2.500"/><text class="ptab-sym" x="1" y="22.500">&amp;</text><text class="ptab-sym" x="13" y="22.500">%</text></svg></span>
                        <span class="ptab"><svg viewBox="0 0 24 24"><path d="M2.500 1.500l5 21M3 2.500l4 2h9.500l3 .5V15.500l-12 1"/><path class="fill-soft" d="M7 4.500h9.500v9h-7z"/><path class="fill-soft" d="M14 8.500h6.500v7H14z"/></svg></span>
                    </nav>
                    <div class="picker-search">
                        <input class="search-input" type="text" placeholder="Search" />
                        <svg class="search-icon" viewBox="0 0 16 16"><circle cx="6.500" cy="6.500" r="5" fill="none" stroke="#777" stroke-width="1.300"/><path d="M10 10l5 5" stroke="#777" stroke-width="1.500"/></svg>
                    </div>
                    <div class="picker-scroll">
                        <div class="picker-list">
                            <h4 class="cat">Frequently Used</h4>
                            <div class="emoji-grid">
                                <svg><use href="#thumb"/></svg><svg><use href="#grinning"/></svg><svg><use href="#kissheart"/></svg><svg><use href="#hearteyes"/></svg><svg><use href="#winktongue"/></svg><svg><use href="#squint"/></svg><svg><use href="#sweat"/></svg><svg><use href="#joy"/></svg><svg><use href="#nerd"/></svg><svg><use href="#halo"/></svg><svg><use href="#shades"/></svg><svg><use href="#family"/></svg><svg><use href="#sqtongue"/></svg><svg><use href="#wink"/></svg><svg><use href="#melt"/></svg><svg><use href="#slight"/></svg>
                                <svg><use href="#scream"/></svg>
                            </div>
                            <h4 class="cat">Smileys &amp; People</h4>
                            <div class="emoji-grid">
                                <svg><use href="#grinning"/></svg><svg><use href="#smiley"/></svg><svg><use href="#smile"/></svg><svg><use href="#beam"/></svg><svg><use href="#squint"/></svg><svg><use href="#sweat"/></svg><svg><use href="#rofl"/></svg><svg><use href="#joy"/></svg><svg><use href="#slight"/></svg><svg><use href="#upside"/></svg><svg><use href="#melt"/></svg><svg><use href="#wink"/></svg><svg><use href="#blush"/></svg><svg><use href="#halo"/></svg><svg><use href="#hearts"/></svg><svg><use href="#hearteyes"/></svg>
                                <svg><use href="#star"/></svg><svg><use href="#kissheart"/></svg><svg><use href="#kissing"/></svg><svg><use href="#relaxed"/></svg><svg><use href="#kissclosed"/></svg><svg><use href="#kisssmile"/></svg><svg><use href="#tear"/></svg><svg><use href="#yum"/></svg><svg><use href="#tongue"/></svg><svg><use href="#winktongue"/></svg><svg><use href="#zany"/></svg><svg><use href="#sqtongue"/></svg><svg><use href="#money"/></svg><svg><use href="#hug"/></svg><svg><use href="#giggle"/></svg><svg><use href="#hush"/></svg>
                                <svg><use href="#peek"/></svg><svg><use href="#shush"/></svg><svg><use href="#think"/></svg><svg><use href="#salute"/></svg><svg><use href="#zipper"/></svg><svg><use href="#brow"/></svg><svg><use href="#neutral"/></svg><svg><use href="#expr"/></svg><svg><use href="#nomouth"/></svg><svg><use href="#dotted"/></svg><svg><use href="#clouds"/></svg><svg><use href="#smirk"/></svg><svg><use href="#unamused"/></svg><svg><use href="#roll"/></svg><svg><use href="#grimace"/></svg><svg><use href="#exhale"/></svg>
                                <svg><use href="#lying"/></svg><svg><use href="#relieved"/></svg><svg><use href="#pensive"/></svg><svg><use href="#sleepy"/></svg><svg><use href="#drool"/></svg><svg><use href="#sleeping"/></svg><svg><use href="#mask"/></svg><svg><use href="#thermo"/></svg><svg><use href="#bandage"/></svg><svg><use href="#nausea"/></svg><svg><use href="#vomit"/></svg><svg><use href="#sneeze"/></svg><svg><use href="#hot"/></svg><svg><use href="#cold"/></svg><svg><use href="#woozy"/></svg><svg><use href="#dizzy"/></svg>
                                <svg><use href="#spiral"/></svg><svg><use href="#explode"/></svg><svg><use href="#cowboy"/></svg><svg><use href="#party"/></svg><svg><use href="#disguise"/></svg><svg><use href="#shades"/></svg><svg><use href="#nerd"/></svg><svg><use href="#monocle"/></svg><svg><use href="#confused"/></svg><svg><use href="#diag"/></svg><svg><use href="#worried"/></svg><svg><use href="#sfrown"/></svg><svg><use href="#frown"/></svg><svg><use href="#openm"/></svg><svg><use href="#hushed"/></svg><svg><use href="#astonished"/></svg>
                            </div>
                        </div>
                        <div class="fake-scrollbar">
                            <span class="arrow-up"></span>
                            <span class="thumb"></span>
                            <span class="arrow-down"></span>
                        </div>
                    </div>
                    <div class="picker-preview">
                        <span class="skin-dot"></span>
                    </div>
                </div>
            </section>
        </div>
    </main>
</body>
</html>
```
FILE: styles.css
```css
body {
    margin: 0;
    height: 1027px;
    overflow: hidden;
    display: flex;
    flex-direction: column;
    font-family: "Open Sans", Arial, sans-serif;
    background-color: #00a884;
}

.sprite {
    display: block;
    width: 0;
    height: 0;
}

/* browser chrome */
.tabstrip {
    height: 42px;
    display: flex;
    align-items: center;
    background-color: #dee1e6;
    flex-shrink: 0;
}

.tab {
    position: relative;
    width: 300px;
    height: 42px;
    margin-left: 7px;
    box-sizing: border-box;
    padding: 0 13px 2px 17px;
    display: flex;
    align-items: center;
    background-color: #fff;
    border-radius: 9px 9px 0 0;
}

.tab::before,
.tab::after {
    content: "";
    position: absolute;
    bottom: 0;
    width: 8px;
    height: 8px;
}

.tab::before {
    left: -8px;
    background: radial-gradient(circle at 0 0, #dee1e6 8px, #fff 8.5px);
}

.tab::after {
    right: -8px;
    background: radial-gradient(circle at 100% 0, #dee1e6 8px, #fff 8.5px);
}

.favicon {
    width: 17px;
    height: 17px;
    flex-shrink: 0;
}

.tab-title {
    margin-left: 11px;
    font-size: 14.4px;
    color: #45474a;
    flex: 1;
}

.tab-close {
    width: 14px;
    height: 14px;
}

.new-tab {
    width: 16px;
    height: 16px;
    margin: 0 0 3px 19px;
}

.win-controls {
    margin-left: auto;
    display: flex;
    align-items: center;
    height: 34px;
    align-self: flex-start;
}

.win-controls svg {
    width: 15px;
    height: 15px;
    padding: 0 21.2px;
}

.toolbar {
    height: 52px;
    display: flex;
    align-items: center;
    background-color: #fff;
    border-bottom: 1px solid #d5d7db;
    flex-shrink: 0;
}

.tool {
    width: 20px;
    height: 20px;
    margin-left: 20px;
}

.tool.first {
    margin-left: 15px;
}

.omnibox {
    width: 1609px;
    height: 43px;
    margin-left: 17px;
    display: flex;
    align-items: center;
    background-color: #f1f3f4;
    border-radius: 22px;
    box-sizing: border-box;
    padding: 0 12px 0 14px;
}

.info {
    width: 16px;
    height: 16px;
}

.url {
    margin-left: 13px;
    font-size: 16.4px;
    color: #202124;
}

.url-port {
    color: #5f6368;
}

.omni-actions {
    margin-left: auto;
    display: flex;
    gap: 20px;
}

.omni-actions svg {
    width: 20px;
    height: 20px;
}

.extras {
    display: flex;
    align-items: center;
    margin-left: 18.5px;
    gap: 20px;
}

.extras svg {
    width: 20px;
    height: 20px;
    display: block;
}

.profile {
    width: 28px;
    height: 28px;
    margin: 0 -5px 0 -3px;
    border-radius: 50%;
    background-color: #e3e6ea;
    display: flex;
    align-items: center;
    justify-content: center;
}

/* page */
.page {
    flex: 1;
    padding: 37px 29px 35px 26px;
    min-height: 0;
    display: flex;
}

.app {
    flex: 1;
    display: flex;
    background-color: #f4f4f4;
}

.avatar {
    flex-shrink: 0;
    display: block;
}

.avatar-lg {
    width: 63px;
    height: 63px;
}

.avatar-sm {
    width: 38px;
    height: 38px;
}

.sidebar {
    width: 552px;
    flex-shrink: 0;
}

.side-head {
    height: 88px;
    display: flex;
    align-items: center;
    background-color: #f0f2f5;
    padding: 0 8px 0 12px;
}

.me-name {
    margin-left: 56px;
    padding-top: 2px;
    font-size: 22px;
    color: #4a4f57;
    flex: 1;
}

.add-chat {
    width: 26px;
    height: 26px;
    margin-top: -1px;
}

.contact {
    height: 62px;
    display: flex;
    align-items: center;
    background-color: #fff;
    border-bottom: 1px solid #e9e9e9;
    padding-left: 6px;
}

.contact-name {
    font-size: 18.5px;
    color: #4a4a4a;
    margin-left: 27px;
}

.contact .contact-name {
    padding-top: 2px;
}

.chat {
    flex: 1;
    position: relative;
    display: flex;
    flex-direction: column;
}

.chat-head {
    height: 88px;
    flex-shrink: 0;
    display: flex;
    align-items: center;
    background-color: #f0f2f5;
    padding-left: 24px;
}

.chat-head .contact-name {
    margin-left: 12px;
}

.back {
    width: 22px;
    height: 22px;
    margin: -1px 17px 0 0;
}

.bubble {
    width: 360px;
    height: 107px;
    margin: 12px 0 0 19px;
    box-sizing: border-box;
    padding: 15px 13px;
    background-color: #f0f2f5;
    border-radius: 13px;
}

.bubble-text {
    margin: 0;
    font-size: 19.1px;
    line-height: 27px;
    color: #1a1a1a;
}

.bubble-text .msg-emoji {
    width: 22px;
    height: 22px;
    margin-left: 3px;
}

.bubble-time {
    display: block;
    margin-top: -2px;
    font-size: 14.7px;
    line-height: 22px;
    color: #9b9b9b;
}

.msg-emoji {
    width: 23px;
    height: 23px;
    vertical-align: -5px;
}

.composer {
    margin: auto 32px 7px 39px;
    height: 43px;
    display: flex;
}

.composer-input {
    flex: 1;
    display: flex;
    align-items: center;
    gap: 7px;
    padding: 3px 0 0 19px;
    font-family: "Liberation Sans", Arial, sans-serif;
    font-size: 20px;
    color: #111;
    background-color: #fff;
    border-radius: 8px 0 0 8px;
}

.composer-actions {
    width: 222px;
    display: flex;
    align-items: center;
    box-sizing: border-box;
    padding-left: 46px;
    background-color: #eee;
    border-radius: 0 8px 8px 0;
}

.like {
    width: 18px;
    height: 18px;
    margin-top: 3px;
}

.send {
    margin: -2px 0 0 83px;
    font-family: "Liberation Sans", Arial, sans-serif;
    font-size: 16.5px;
    color: #111;
}

/* emoji picker, floats over the chat */
.picker {
    position: absolute;
    right: 163px;
    bottom: 103px;
    width: 672px;
    height: 533px;
    box-sizing: border-box;
    display: flex;
    flex-direction: column;
    background-color: #fff;
    border: 1px solid #d9d9d9;
    border-radius: 5px;
    font-family: "Liberation Sans", Arial, sans-serif;
}

.picker-tabs {
    height: 59px;
    flex-shrink: 0;
    display: flex;
    box-sizing: border-box;
    padding: 0 7.5px 0 7.5px;
    border-bottom: 1px solid #d9d9d9;
}

.ptab {
    flex: 1;
    display: flex;
    justify-content: center;
    padding-top: 15px;
    box-sizing: border-box;
    height: 59px;
}

.ptab.active {
    border-bottom: 4px solid #b163c9;
}

.ptab svg {
    width: 23px;
    height: 23px;
    fill: none;
    stroke: #868686;
    stroke-width: 1.8;
}

.ptab.active svg {
    stroke: #b163c9;
}

.ptab .fill {
    fill: #868686;
    stroke: none;
}

.ptab .fill-soft {
    fill: #fff;
}

.ptab .thick {
    stroke-width: 2.2;
}

.ptab-sym {
    font-size: 11.5px;
    font-weight: bold;
    fill: #868686;
    stroke: none;
}

.picker-search {
    position: relative;
    height: 47px;
    flex-shrink: 0;
    box-sizing: border-box;
    padding: 7px 6px 0 8px;
}

.search-input {
    width: 100%;
    height: 39px;
    box-sizing: border-box;
    padding: 0 11px 2px;
    display: block;
    font-family: "Liberation Sans", Arial, sans-serif;
    font-size: 20px;
    border: 1px solid #d9d9d9;
    border-radius: 6px;
    outline: none;
}

.search-input::placeholder {
    color: #75757a;
}

.search-icon {
    position: absolute;
    top: 13px;
    right: 21px;
    width: 17px;
    height: 17px;
}

.picker-scroll {
    flex: 1;
    min-height: 0;
    display: flex;
    border-bottom: 1px solid #d9d9d9;
}

.picker-list {
    flex: 1;
    overflow: hidden;
    padding-left: 7.5px;
}

.cat {
    margin: 0;
    height: 35px;
    line-height: 34px;
    padding-left: 7.5px;
    font-size: 20px;
    font-weight: normal;
    color: #4d5766;
}

.emoji-grid {
    display: grid;
    grid-template-columns: repeat(16, 37.5px);
    grid-auto-rows: 37.5px;
}

.emoji-grid svg {
    width: 24px;
    height: 24px;
    place-self: center;
}

.fake-scrollbar {
    width: 20px;
    flex-shrink: 0;
    display: flex;
    flex-direction: column;
    align-items: center;
    background-color: #f1f1f1;
}

.arrow-up,
.arrow-down {
    width: 0;
    height: 0;
    border-left: 5px solid transparent;
    border-right: 5px solid transparent;
}

.arrow-up {
    margin-top: 9px;
    border-bottom: 5px solid #a3a3a3;
}

.arrow-down {
    margin-top: auto;
    margin-bottom: 8px;
    border-top: 5px solid #505050;
}

.thumb {
    width: 17px;
    height: 21px;
    margin-top: 6px;
    background-color: #c1c1c1;
}

.picker-preview {
    flex: 0 0 88px;
    display: flex;
    align-items: center;
    justify-content: flex-end;
    padding-right: 37px;
}

.skin-dot {
    width: 16px;
    height: 16px;
    border-radius: 50%;
    background-color: #ffc537;
    border: 3px solid #fff;
    box-shadow: 0 0 0 1px #d5d5d5;
}
```
